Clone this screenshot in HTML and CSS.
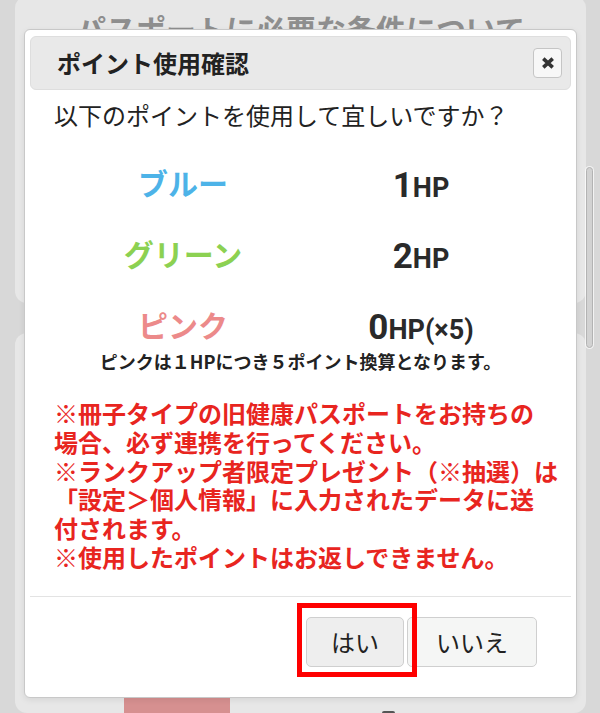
FILE: index.html
```html
<!DOCTYPE html>
<html lang="ja">
    <head>
        <meta charset="UTF-8" />
        <meta name="viewport" content="width=device-width, initial-scale=1.0" />
        <link rel="stylesheet" href="styles.css">
        <title>ポイント使用確認</title>
    </head>
    <body>
        <div class="page">
            <section class="card card--top">
                <h2 class="card__title">パスポートに必要な条件について</h2>
            </section>

            <section class="card card--next">
                <div class="card__row">
                    <div class="card__media"></div>
                    <div class="card__dot"></div>
                </div>
            </section>
        </div>

        <div class="scrollbar"></div>

        <div class="modal">
            <div class="modal__header">
                <h1 class="modal__title">ポイント使用確認</h1>
                <button class="modal__close" type="button">
                    <svg width="14" height="12" viewBox="0 0 14 12">
                        <path d="M2.3 1.6 L11.7 10.4 M11.7 1.6 L2.3 10.4" stroke="#333" stroke-width="3.6" fill="none" />
                    </svg>
                </button>
            </div>

            <div class="modal__body">
                <p class="modal__question">以下のポイントを使用して宜しいですか？</p>

                <div class="points">
                    <span class="points__name points__name--blue">ブルー</span>
                    <span class="points__value"><span class="points__num">1</span>HP</span>

                    <span class="points__name points__name--green">グリーン</span>
                    <span class="points__value"><span class="points__num">2</span>HP</span>

                    <span class="points__name points__name--pink">ピンク</span>
                    <span class="points__value"><span class="points__num">0</span>HP(×5)</span>
                </div>

                <p class="points__note">ピンクは１HPにつき５ポイント換算となります。</p>

                <p class="modal__notice">
                    ※冊子タイプの旧健康パスポートをお持ちの<br>場合、必ず連携を行ってください。<br>※ランクアップ者限定プレゼント（※抽選）は<br>「設定＞個人情報」に入力されたデータに送<br>付されます。<br>※使用したポイントはお返しできません。
                </p>
            </div>

            <div class="modal__footer">
                <div class="modal__yes">
                    <button class="btn btn--yes" type="button">はい</button>
                    <span class="highlight"></span>
                </div>
                <button class="btn" type="button">いいえ</button>
            </div>
        </div>
    </body>
</html>
```

FILE: styles.css
```css
*,
*::before,
*::after {
    box-sizing: border-box;
}

html,
body,
h1,
h2,
p {
    margin: 0;
}

html,
body {
    height: 713px;
    overflow: hidden;
}

body {
    background: #d8d8d8;
    font-family: 'Noto Sans CJK JP', sans-serif;
    color: #222;
}

.page {
    padding: 0 14px 0 15px;
}

.card {
    background: #e7e7e7;
    border-radius: 12px;
}

.card--top {
    margin-top: -4px;
    height: 307px;
    padding-top: 14px;
}

.card__title {
    font-size: 30px;
    line-height: 36px;
    font-weight: 700;
    color: #8e8e8e;
    text-align: center;
}

.card--next {
    margin-top: 30px;
    height: 380px;
    padding-top: 267px;
    overflow: hidden;
}

.card__row {
    display: flex;
    align-items: flex-start;
}

.card__media {
    margin-left: 109px;
    width: 106px;
    height: 113px;
    background: #d69090;
}

.card__dot {
    margin: 111px 0 0 152px;
    width: 13px;
    height: 2px;
    border-radius: 6px 6px 0 0;
    background: #555;
}

.scrollbar {
    position: absolute;
    top: 167px;
    left: 586px;
    width: 7px;
    height: 181px;
    background: #d2d2d2;
    border: 1px solid #b3b3b3;
    border-radius: 4px;
    box-shadow: 0 0 0 1px rgba(255, 255, 255, 0.7);
}

/* modal */

.modal {
    position: absolute;
    top: 29px;
    left: 24px;
    width: 553px;
    background: #fff;
    border: 1px solid #c8c8c8;
    border-radius: 6px;
    box-shadow: 0 2px 6px rgba(0, 0, 0, 0.08);
}

.modal__header {
    margin: 6px 5px 0;
    height: 54px;
    padding: 0 8px 0 26px;
    display: flex;
    align-items: center;
    justify-content: space-between;
    background: #e9e9e9;
    border: 1px solid #dedede;
    border-radius: 6px;
}

.modal__title {
    font-size: 24px;
    line-height: 1;
    font-weight: 700;
    color: #222;
}

.modal__close {
    width: 29px;
    height: 30px;
    padding: 0;
    display: flex;
    align-items: center;
    justify-content: center;
    background: #f7f7f7;
    border: 1px solid #c5c5c5;
    border-radius: 4px;
}

.modal__body {
    padding: 10px 29px 0;
}

.modal__question {
    font-size: 24px;
    line-height: 29px;
}

.points {
    margin: 33px 0 0 10px;
    display: grid;
    grid-template-columns: 238px 238px;
    grid-auto-rows: 40px;
    row-gap: 31px;
    text-align: center;
}

.points__name,
.points__value {
    display: flex;
    align-items: center;
    justify-content: center;
    height: 40px;
    line-height: 1;
}

.points__name {
    font-size: 30px;
    font-weight: 700;
}

.points__name--blue {
    color: #4db3e8;
}

.points__name--green {
    color: #8cd152;
}

.points__name--pink {
    color: #ec8a8a;
}

.points__value {
    align-items: baseline;
    padding-top: 6px;
    font-family: Roboto, 'Noto Sans CJK JP', sans-serif;
    font-size: 27px;
    font-weight: 700;
    color: #2a2a2a;
}

.points__num {
    font-size: 35px;
}

.points__note {
    margin-top: 4px;
    font-size: 18px;
    line-height: 27px;
    font-weight: 700;
    text-align: center;
}

.modal__notice {
    margin-top: 24px;
    font-size: 24px;
    line-height: 28.8px;
    font-weight: 700;
    color: #e8251f;
    white-space: nowrap;
}

.modal__footer {
    margin: 24px 5px 0;
    padding: 20px 34px 30px 0;
    display: flex;
    justify-content: flex-end;
    gap: 3px;
    border-top: 1px solid #e3e3e3;
}

.modal__yes {
    position: relative;
}

.btn {
    height: 50px;
    width: 130px;
    padding: 0;
    font-family: 'Noto Sans CJK JP', sans-serif;
    font-size: 24px;
    color: #222;
    background: #f5f6f5;
    border: 1px solid #cfcfcf;
    border-radius: 5px;
}

.btn--yes {
    width: 98px;
    background: #eeeeee;
}

.highlight {
    position: absolute;
    top: -14px;
    left: -9px;
    right: -13px;
    bottom: -10px;
    border: 5px solid #fe0000;
}
```
